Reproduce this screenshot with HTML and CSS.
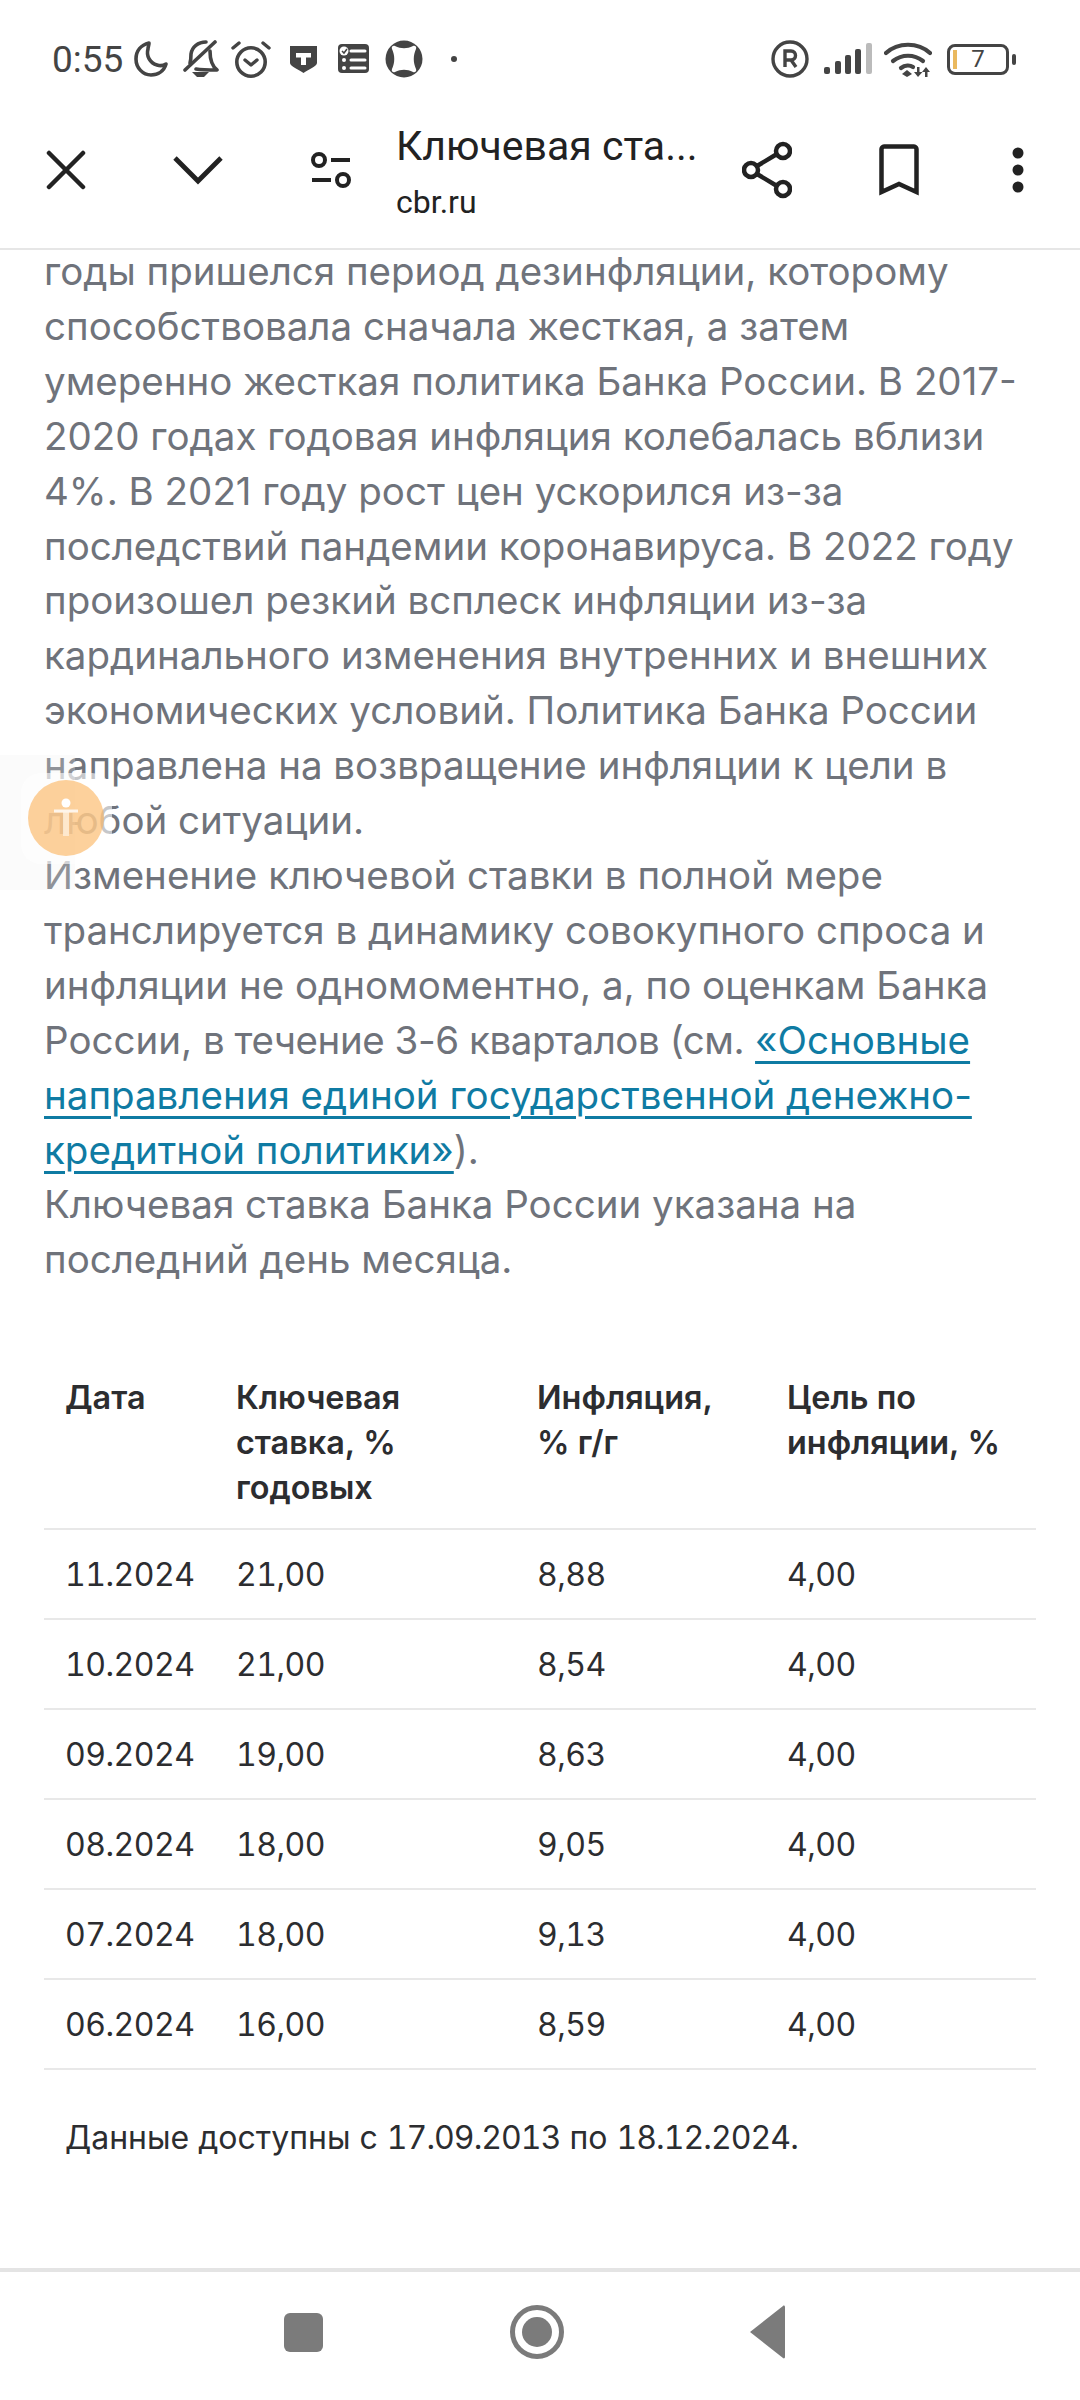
FILE: index.html
```html
<!DOCTYPE html>
<html lang="ru">
<head>
  <meta charset="UTF-8">
  <meta name="viewport" content="width=device-width, initial-scale=1.0">
  <title>Ключевая ставка</title>
  <link rel="stylesheet" href="styles.css">
</head>
<body>
  <div class="phone">

    <div class="status">
      <span class="time">0:55</span>
      <svg class="st moon" width="36" height="38" viewBox="0 0 36 38"><path d="M16 3C8 5 3 11 3 19c0 9 7 16 15 16 7 0 13-4 15-11-3 2-6 2-9 1-7-2-11-9-9-16 0-2 1-4 1-6z" fill="none" stroke="#444" stroke-width="3.6" stroke-linejoin="round"/></svg>
      <svg class="st bell" width="36" height="38" viewBox="0 0 36 38"><g fill="none" stroke="#444" stroke-width="3.6" stroke-linecap="round" stroke-linejoin="round"><path d="M7 23c1-3 1-6 1-9C9 7 15 2 23 2"/><path d="M27 11c0 7 2 15 7 19-6 0-15 0-21-1"/><path d="M2 30L32 2"/></g><path d="M9 32h17l-5 5h-7z" fill="#444"/></svg>
      <svg class="st alarm" width="40" height="38" viewBox="0 0 40 38"><g fill="none" stroke="#444" stroke-linecap="round" stroke-linejoin="round"><circle cx="20" cy="22" r="14.200" stroke-width="3.6"/><path d="M2 8l6-5M38 8l-6-5" stroke-width="3.4"/><path d="M14 20l6 5 6-5" stroke-width="3.4"/></g></svg>
      <svg class="st shield" width="27" height="28" viewBox="0 0 27 28"><path d="M0 1h27v17c0 3-9 7-13.500 10C9 25 0 21 0 18z" fill="#444"/><path d="M6 8h15v4.500h-5V20h-5v-7.500H6z" fill="#fff"/></svg>
      <svg class="st list" width="31" height="30" viewBox="0 0 31 30"><rect width="31" height="29" rx="4" fill="#444"/><g fill="none" stroke="#fff" stroke-width="3" stroke-linecap="round"><path d="M13 7h14M13 16h14M13 24h14"/></g><circle cx="6" cy="7" r="4.500" fill="#fff"/><path d="M4 7l2 2 3-4" fill="none" stroke="#444" stroke-width="1.500"/><circle cx="6" cy="16" r="2" fill="#fff"/><circle cx="6" cy="24" r="2" fill="#fff"/></svg>
      <svg class="st blob" width="38" height="38" viewBox="0 0 38 38"><circle cx="19" cy="19" r="18.500" fill="#444"/><path d="M7 9C6 7 8 5 10 6c6 3 12 3 18 0 2-1 4 1 3 3-3 7-3 13 0 20 1 2-1 4-3 3-6-3-12-3-18 0-2 1-4-1-3-3 3-7 3-13 0-20z" fill="#fff"/></svg>
      <span class="dot"></span>
      <span class="spacer"></span>
      <svg class="st reg" width="38" height="38" viewBox="0 0 38 38"><circle cx="19" cy="19" r="17" fill="none" stroke="#444" stroke-width="3.400"/><path d="M14 27V11h6c6 0 6 9 0 9h-6M20 20l5 7" fill="none" stroke="#444" stroke-width="3.400"/></svg>
      <svg class="st signal" width="48" height="32" viewBox="0 0 48 32"><g fill="#444"><rect x="0" y="24" width="6" height="7" rx="2"/><rect x="11" y="18" width="6" height="13" rx="2"/><rect x="21" y="12" width="6" height="19" rx="2"/><rect x="31" y="6" width="6" height="25" rx="2"/></g><rect x="42" y="0" width="6" height="31" rx="2" fill="#bbb"/></svg>
      <svg class="st wifi" width="48" height="38" viewBox="0 0 48 38"><g fill="none" stroke="#444" stroke-width="4.200" stroke-linecap="round"><path d="M2 13C14 2 34 2 46 13"/><path d="M9 21c9-7 21-7 30 0"/><path d="M17 28c4-3 9-3 12-1"/></g><path d="M23 30l5 4-5 3-5-3z" fill="#444"/><path d="M34 37l-4-5h3v-5h2.500v5h3zM42 27l4 5h-2.500v5H41v-5h-3z" fill="#444"/></svg>
      <span class="battery"><span class="battery-level"></span><span class="battery-num">7</span></span>
      <span class="battery-nub"></span>
    </div>

    <div class="toolbar">
      <svg class="tb-close" width="40" height="40" viewBox="0 0 40 40"><path d="M3 3l34 34M37 3L3 37" stroke="#222" stroke-width="4.500" fill="none" stroke-linecap="round"/></svg>
      <svg class="tb-down" width="50" height="30" viewBox="0 0 50 30"><path d="M2 3l23 23L48 3" stroke="#222" stroke-width="4.800" fill="none"/></svg>
      <svg class="tb-tune" width="42" height="36" viewBox="0 0 42 36"><g fill="none" stroke="#222" stroke-width="4"><circle cx="9" cy="8" r="6"/><circle cx="33" cy="28" r="6"/><path d="M21 8h19M2 28h19"/></g></svg>
      <div class="tb-title">
        <div class="tb-name">Ключевая ста...</div>
        <div class="tb-host">cbr.ru</div>
      </div>
      <svg class="tb-share" width="50" height="58" viewBox="0 0 50 58"><g fill="none" stroke="#222" stroke-width="4.500"><circle cx="41" cy="10" r="7"/><circle cx="41" cy="48" r="7"/><circle cx="9" cy="29" r="7"/><path d="M15 25l20-12M15 33l20 12"/></g></svg>
      <svg class="tb-mark" width="40" height="52" viewBox="0 0 40 52"><path d="M2.500 48V5c0-1 1-2.500 2.500-2.500h30c1.500 0 2.500 1.500 2.500 2.500v43L20 40z" fill="none" stroke="#222" stroke-width="4.500"/></svg>
      <svg class="tb-more" width="12" height="46" viewBox="0 0 12 46"><g fill="#222"><circle cx="6" cy="6" r="5.500"/><circle cx="6" cy="23" r="5.500"/><circle cx="6" cy="40" r="5.500"/></g></svg>
    </div>

    <div class="content">
      <div class="article">
        <p>годы пришелся период дезинфляции, которому способствовала сначала жесткая, а затем умеренно жесткая политика Банка России. В 2017-2020 годах годовая инфляция колебалась вблизи 4%. В 2021 году рост цен ускорился из-за последствий пандемии коронавируса. В 2022 году произошел резкий всплеск инфляции из-за кардинального изменения внутренних и внешних экономических условий. Политика Банка России направлена на возвращение инфляции к цели в любой ситуации.</p>
        <p>Изменение ключевой ставки в полной мере транслируется в динамику совокупного спроса и инфляции не одномоментно, а, по оценкам Банка России, <span class="tight">в течение 3-6 кварталов (см.</span> <a href="#">«Основные направления единой государственной денежно-кредитной политики»</a>).</p>
        <p>Ключевая ставка Банка России указана на последний день месяца.</p>
      </div>

      <table class="rates">
        <thead>
          <tr><th class="c1">Дата</th><th class="c2">Ключевая ставка,&nbsp;% годовых</th><th class="c3">Инфляция, %&nbsp;г/г</th><th class="c4">Цель по инфляции,&nbsp;%</th></tr>
        </thead>
        <tbody>
          <tr><td>11.2024</td><td>21,00</td><td>8,88</td><td>4,00</td></tr>
          <tr><td>10.2024</td><td>21,00</td><td>8,54</td><td>4,00</td></tr>
          <tr><td>09.2024</td><td>19,00</td><td>8,63</td><td>4,00</td></tr>
          <tr><td>08.2024</td><td>18,00</td><td>9,05</td><td>4,00</td></tr>
          <tr><td>07.2024</td><td>18,00</td><td>9,13</td><td>4,00</td></tr>
          <tr><td>06.2024</td><td>16,00</td><td>8,59</td><td>4,00</td></tr>
        </tbody>
      </table>

      <p class="note">Данные доступны с <span class="date">17.09.2013</span> по <span class="date">18.12.2024.</span></p>

      <div class="float-panel"></div>
      <div class="float-tile"></div>
      <div class="float-btn">
        <svg width="28" height="40" viewBox="0 0 28 40"><circle cx="14" cy="5" r="4.500" fill="#fff"/><path d="M2 13h24" stroke="#fff" stroke-width="3" opacity=".8"/><path d="M11 14h6v24h-6z" fill="#fff" opacity=".5"/></svg>
      </div>
    </div>

    <div class="navbar">
      <span class="nav-square"></span>
      <span class="nav-home"><span class="nav-home-in"></span></span>
      <svg class="nav-back" width="38" height="56" viewBox="0 0 38 56"><path d="M2 28L35 2c1-1 2 0 2 1v50c0 1-1 2-2 1z" fill="#7b7b7b"/></svg>
    </div>

  </div>
</body>
</html>
```

FILE: styles.css
```css
* {
  box-sizing: border-box;
}

html, body {
  margin: 0;
  padding: 0;
  background-color: #fff;
}

.phone {
  width: 1080px;
  height: 2400px;
  display: flex;
  flex-direction: column;
  overflow: hidden;
  font-family: 'Inter', sans-serif;
}

/* status bar */
.status {
  height: 118px;
  flex: none;
  display: flex;
  align-items: center;
  padding-left: 52px;
  color: #444;
}

.time {
  font-family: 'Roboto', sans-serif;
  font-size: 37px;
  width: 81px;
}

.st {
  flex: none;
}

.bell { margin-left: 14px; }
.alarm { margin-left: 12px; }
.shield { margin-left: 19px; }
.list { margin-left: 21px; }
.blob { margin-left: 16px; }

.dot {
  width: 6px;
  height: 6px;
  margin-left: 28px;
  border-radius: 50%;
  background-color: #444;
}

.spacer {
  flex: 1;
}

.signal { margin-left: 15px; }
.wifi { margin-left: 12px; }

.battery {
  width: 62px;
  height: 31px;
  margin-left: 15px;
  display: flex;
  align-items: center;
  justify-content: center;
  position: relative;
  border: 3.5px solid #444;
  border-radius: 8px;
}

.battery-level {
  position: absolute;
  left: 3px;
  top: 3px;
  bottom: 3px;
  width: 4px;
  background-color: #eab95f;
}

.battery-num {
  font-family: 'Roboto', sans-serif;
  font-size: 24px;
  color: #444;
}

.battery-nub {
  width: 4px;
  height: 11px;
  margin-left: 3px;
  margin-right: 64px;
  border-radius: 2px;
  background-color: #444;
}

/* browser toolbar */
.toolbar {
  height: 132px;
  flex: none;
  display: flex;
  align-items: center;
  padding-left: 46px;
  padding-bottom: 26px;
  border-bottom: 2px solid #e6e6e6;
}

.toolbar svg {
  flex: none;
}

.tb-down { margin-left: 87px; }
.tb-tune { margin-left: 87px; }

.tb-title {
  width: 345px;
  margin-left: 44px;
  padding-top: 8px;
  color: #222;
}

.tb-name {
  font-family: 'Roboto', sans-serif;
  font-size: 41px;
  line-height: 50px;
  white-space: nowrap;
}

.tb-host {
  font-family: 'Roboto', sans-serif;
  font-size: 32px;
  line-height: 50px;
  padding-top: 6px;
}

.tb-share { margin-left: 1px; }
.tb-mark { margin-left: 87px; }
.tb-more { margin-left: 93px; }

/* page */
.content {
  flex: 1;
  position: relative;
  overflow: hidden;
}

.article {
  margin-top: -6px;
  padding: 0 44px;
  color: #6f737b;
  font-size: 38.5px;
  line-height: 54.9px;
}

.article p {
  margin: 0;
}

.article a {
  color: #0f7ba3;
  text-decoration-thickness: 3px;
  text-underline-offset: 7px;
}

.tight {
  letter-spacing: -0.45px;
}

.rates {
  width: 992px;
  margin: 65px 0 0 44px;
  border-collapse: collapse;
  table-layout: fixed;
  color: #2c2d30;
  font-size: 32.4px;
  line-height: 44.8px;
}

.rates th {
  padding: 24px 21px 17px;
  vertical-align: top;
  text-align: left;
  font-weight: 600;
  border-bottom: 2px solid #e8e8e8;
}

.rates td {
  height: 90px;
  padding: 4px 0 0 21px;
  font-size: 32px;
  letter-spacing: -0.5px;
  font-variant-numeric: tabular-nums;
  border-bottom: 2px solid #e8e8e8;
}

.c1 { width: 171px; }
.c2 { width: 301px; }
.c3 { width: 250px; }
.c4 { width: 270px; }

.note {
  margin: 46px 0 0 65px;
  color: #2c2d30;
  font-size: 32px;
  line-height: 44px;
}

.date {
  letter-spacing: -0.95px;
  font-variant-numeric: tabular-nums;
}

/* floating accessibility button */
.float-panel {
  position: absolute;
  left: 0;
  top: 505px;
  width: 75px;
  height: 135px;
  background-color: rgba(240, 240, 240, 0.25);
}

.float-tile {
  position: absolute;
  left: 21px;
  top: 523px;
  width: 91px;
  height: 91px;
  border-radius: 20px;
  background-color: rgba(255, 255, 255, 0.6);
}

.float-btn {
  position: absolute;
  left: 28px;
  top: 530px;
  width: 76px;
  height: 76px;
  display: flex;
  align-items: center;
  justify-content: center;
  border-radius: 50%;
  background-color: rgba(252, 178, 90, 0.6);
}

/* navigation bar */
.navbar {
  height: 132px;
  flex: none;
  display: flex;
  align-items: center;
  padding-left: 284px;
  padding-bottom: 8px;
  border-top: 4px solid #e4e4e4;
}

.nav-square {
  width: 39px;
  height: 39px;
  border-radius: 6px;
  background-color: #7b7b7b;
}

.nav-home {
  width: 54px;
  height: 54px;
  margin-left: 187px;
  display: flex;
  align-items: center;
  justify-content: center;
  border: 5px solid #7b7b7b;
  border-radius: 50%;
}

.nav-home-in {
  width: 30px;
  height: 30px;
  border-radius: 50%;
  background-color: #7b7b7b;
}

.nav-back {
  margin-left: 184px;
}
```
